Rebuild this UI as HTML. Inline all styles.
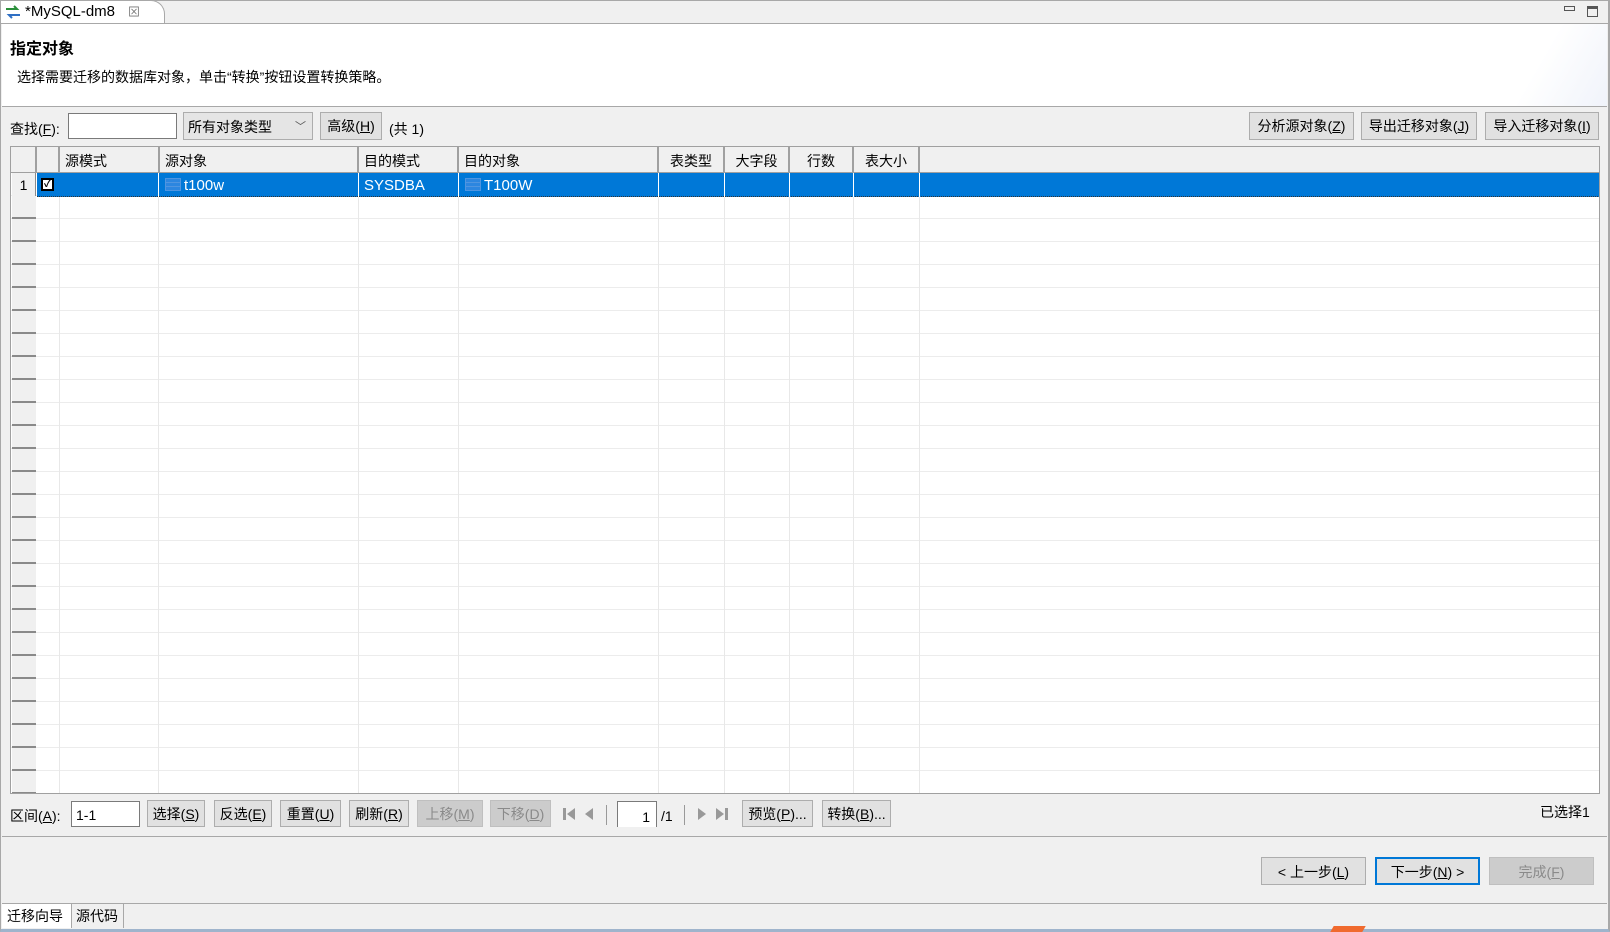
<!DOCTYPE html>
<html><head><meta charset="utf-8">
<style>
*{box-sizing:border-box;margin:0;padding:0}
body{width:1610px;height:932px;background:#f0f0f0;font-family:"Liberation Sans","Noto Sans CJK SC",sans-serif;font-size:14px;color:#000;position:relative;overflow:hidden}
.a{position:absolute}
.btn{position:absolute;height:27px;border:1px solid #adadad;background:#e1e1e1;text-align:center;line-height:25px;font-size:14px;white-space:nowrap}
.dis{color:#8a8a8a;background:#cccccc;border-color:#bfbfbf}
u{text-decoration:underline}
.hd{position:absolute;top:0;height:26px;line-height:28px;border-right:2px solid #a0a0a0;border-bottom:1px solid #a0a0a0;background:#f0f0f0;padding-left:5px;font-size:14px}
.vl{position:absolute;top:26px;bottom:0;width:1px;background:#e8e8e8}
.cell{position:absolute;top:27px;color:#fff;font-size:15px;line-height:24px}
.ico{position:absolute;top:31px;width:16px;height:13px;border:1px solid #4f95e0;background:repeating-linear-gradient(to bottom,#2c86e0 0 3px,#4f95e0 3px 4px)}
</style></head><body>
<div class="a" style="left:0;top:0;width:1610px;height:932px;border:1px solid #a8a8a8;border-bottom:3px solid #9fb4cc;border-right:2px solid #a8a8a8"></div>
<div class="a" style="left:0;top:0;width:165px;height:24px;background:#fff;border:1px solid #a8a8a8;border-bottom:none;border-radius:0 14px 0 0"></div>
<svg class="a" style="left:4px;top:5px" width="18" height="14" viewBox="0 0 18 14"><path d="M2 4h11l-3-3" stroke="#2a8f3a" stroke-width="2" fill="none"/><path d="M16 10H5l3 3" stroke="#2f6fc4" stroke-width="2" fill="none"/></svg>
<div class="a" style="left:25px;top:3px;font-size:15px">*MySQL-dm8</div>
<div class="a" style="left:128px;top:3px;font-size:12px;color:#777">⊠</div>
<div class="a" style="left:1564px;top:6px;width:11px;height:5px;border:1px solid #555"></div>
<div class="a" style="left:1587px;top:6px;width:11px;height:11px;border:1px solid #555;border-top-width:3px"></div>
<div class="a" style="left:1px;top:23px;width:1607px;height:1px;background:#a8a8a8"></div>
<div class="a" style="left:2px;top:24px;width:1605px;height:83px;background:#fff;border-bottom:1px solid #a8a8a8;overflow:hidden">
 <div class="a" style="right:-60px;top:-40px;width:160px;height:170px;border-radius:50%;background:linear-gradient(120deg,#fff 30%,#e2e8f6)"></div>
</div>
<div class="a" style="left:10px;top:35px;font-size:16px;font-weight:bold">指定对象</div>
<div class="a" style="left:17px;top:67px;font-size:14px">选择需要迁移的数据库对象，单击“转换”按钮设置转换策略。</div>
<div class="a" style="left:10px;top:119px">查找(<u>F</u>):</div>
<div class="a" style="left:68px;top:113px;width:109px;height:26px;background:#fff;border:1px solid #7a7a7a"></div>
<div class="a" style="left:183px;top:112px;width:130px;height:28px;background:#e5e5e5;border:1px solid #adadad;line-height:28px;padding-left:4px">所有对象类型<span style="position:absolute;right:6px;top:0;font-size:11px;color:#555">﹀</span></div>
<div class="btn" style="left:320px;top:112px;width:62px;height:28px;line-height:27px">高级(<u>H</u>)</div>
<div class="a" style="left:389px;top:119px">(共 1)</div>
<div class="btn" style="left:1249px;top:112px;width:105px;height:28px;line-height:27px">分析源对象(<u>Z</u>)</div>
<div class="btn" style="left:1361px;top:112px;width:116px;height:28px;line-height:27px">导出迁移对象(<u>J</u>)</div>
<div class="btn" style="left:1485px;top:112px;width:114px;height:28px;line-height:27px">导入迁移对象(<u>I</u>)</div>
<div class="a" style="left:10px;top:146px;width:1590px;height:648px;background:#fff;border:1px solid #a0a0a0;overflow:hidden">
 <div class="a" style="left:0;top:0;width:1590px;height:26px;background:#f0f0f0;border-bottom:1px solid #a0a0a0"></div>
 <div class="a" style="left:0;top:26px;width:1590px;bottom:0;background:repeating-linear-gradient(to bottom,transparent 0 22px,#ececec 22px 23px)"></div>
 <div class="a" style="left:1px;top:26px;width:24px;bottom:0;background:repeating-linear-gradient(to bottom,#f0f0f0 0 21px,#8a8a8a 21px 23px)"></div>
 <div class="hd" style="left:0;width:26px;padding:0"></div>
 <div class="hd" style="left:26px;width:23px;padding:0"></div>
 <div class="hd" style="left:49px;width:100px">源模式</div>
 <div class="hd" style="left:149px;width:199px">源对象</div>
 <div class="hd" style="left:348px;width:100px">目的模式</div>
 <div class="hd" style="left:448px;width:200px">目的对象</div>
 <div class="hd" style="left:648px;width:66px;text-align:center;padding:0">表类型</div>
 <div class="hd" style="left:714px;width:65px;text-align:center;padding:0">大字段</div>
 <div class="hd" style="left:779px;width:64px;text-align:center;padding:0">行数</div>
 <div class="hd" style="left:843px;width:66px;text-align:center;padding:0">表大小</div>
 <div class="vl" style="left:48px"></div><div class="vl" style="left:147px"></div><div class="vl" style="left:347px"></div><div class="vl" style="left:447px"></div><div class="vl" style="left:647px"></div><div class="vl" style="left:713px"></div><div class="vl" style="left:778px"></div><div class="vl" style="left:842px"></div><div class="vl" style="left:908px"></div>
 <div class="a" style="left:26px;top:26px;width:1563px;height:24px;background:#0078d7;border-bottom:1px dotted #333"></div>
 <div class="a" style="left:1px;top:26px;width:24px;height:23px;background:#f0f0f0;border-right:1px solid #8a8a8a;text-align:center;line-height:24px">1</div>
 <div class="a" style="left:30px;top:31px;width:13px;height:13px;background:#fff;border:2px solid #000;font-size:10px;line-height:9px;text-align:center;font-weight:bold">✓</div>
 <div class="ico" style="left:154px"></div>
 <div class="cell" style="left:173px">t100w</div>
 <div class="cell" style="left:353px">SYSDBA</div>
 <div class="ico" style="left:454px"></div>
 <div class="cell" style="left:473px">T100W</div>
 <div class="a" style="left:147px;top:26px;width:1px;height:24px;background:#fff"></div><div class="a" style="left:347px;top:26px;width:1px;height:24px;background:#fff"></div><div class="a" style="left:447px;top:26px;width:1px;height:24px;background:#fff"></div><div class="a" style="left:647px;top:26px;width:1px;height:24px;background:#fff"></div><div class="a" style="left:713px;top:26px;width:1px;height:24px;background:#fff"></div><div class="a" style="left:778px;top:26px;width:1px;height:24px;background:#fff"></div><div class="a" style="left:842px;top:26px;width:1px;height:24px;background:#fff"></div><div class="a" style="left:908px;top:26px;width:1px;height:24px;background:#fff"></div>
</div>
<div class="a" style="left:10px;top:806px">区间(<u>A</u>):</div>
<div class="a" style="left:71px;top:801px;width:69px;height:26px;background:#fff;border:1px solid #7a7a7a;padding-left:4px;line-height:26px">1-1</div>
<div class="btn" style="left:147px;top:800px;width:58px;line-height:27px">选择(<u>S</u>)</div>
<div class="btn" style="left:214px;top:800px;width:58px;line-height:27px">反选(<u>E</u>)</div>
<div class="btn" style="left:280px;top:800px;width:61px;line-height:27px">重置(<u>U</u>)</div>
<div class="btn" style="left:349px;top:800px;width:60px;line-height:27px">刷新(<u>R</u>)</div>
<div class="btn dis" style="left:417px;top:800px;width:66px;line-height:27px">上移(<u>M</u>)</div>
<div class="btn dis" style="left:490px;top:800px;width:61px;line-height:27px">下移(<u>D</u>)</div>
<svg class="a" style="left:562px;top:806px" width="34" height="16" viewBox="0 0 34 16"><rect x="1" y="2" width="3" height="12" fill="#999"/><path d="M13 2v12L5 8z" fill="#999"/><path d="M31 2v12L23 8z" fill="#999"/></svg>
<div class="a" style="left:606px;top:805px;width:1px;height:20px;background:#999"></div>
<div class="a" style="left:617px;top:801px;width:40px;height:26px;background:#fff;border:1px solid #7a7a7a;border-bottom:none;text-align:right;padding-right:6px;line-height:30px">1</div>
<div class="a" style="left:661px;top:808px">/1</div>
<div class="a" style="left:684px;top:805px;width:1px;height:20px;background:#999"></div>
<svg class="a" style="left:696px;top:806px" width="34" height="16" viewBox="0 0 34 16"><path d="M2 2v12l8-6z" fill="#999"/><path d="M20 2v12l8-6z" fill="#999"/><rect x="29" y="2" width="3" height="12" fill="#999"/></svg>
<div class="btn" style="left:742px;top:800px;width:71px;line-height:27px">预览(<u>P</u>)...</div>
<div class="btn" style="left:822px;top:800px;width:69px;line-height:27px">转换(<u>B</u>)...</div>
<div class="a" style="left:1540px;top:802px">已选择1</div>
<div class="a" style="left:2px;top:836px;width:1605px;height:1px;background:#a8a8a8"></div>
<div class="btn" style="left:1261px;top:857px;width:105px;height:28px;line-height:28px">&lt; 上一步(<u>L</u>)</div>
<div class="btn" style="left:1375px;top:857px;width:105px;height:28px;border:2px solid #0078d7;line-height:26px">下一步(<u>N</u>) &gt;</div>
<div class="btn dis" style="left:1489px;top:857px;width:105px;height:28px;line-height:28px">完成(<u>F</u>)</div>
<div class="a" style="left:2px;top:903px;width:1605px;height:1px;background:#a8a8a8"></div>
<div class="a" style="left:2px;top:904px;width:69px;height:24px;background:#fff;line-height:25px;padding-left:5px">迁移向导</div>
<div class="a" style="left:71px;top:904px;width:53px;height:24px;border-right:1px solid #a8a8a8;border-left:1px solid #a8a8a8;line-height:25px;padding-left:4px">源代码</div>
<div class="a" style="left:1332px;top:926px;width:32px;height:6px;background:#f06a2e;transform:skewX(-30deg)"></div>
</body></html>
